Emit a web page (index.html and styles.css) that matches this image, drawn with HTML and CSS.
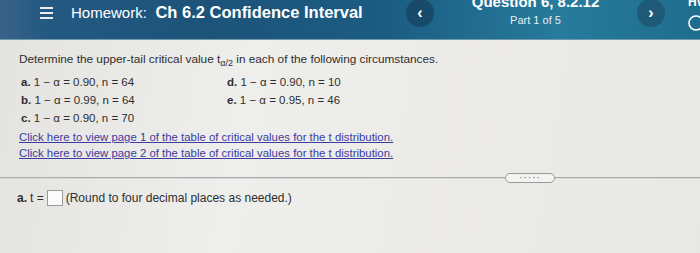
FILE: index.html
```html
<!DOCTYPE html>
<html lang="en">
<head>
    <meta charset="UTF-8">
    <meta name="viewport" content="width=device-width, initial-scale=1.0">
    <link rel="stylesheet" href="styles.css">
    <title>Homework: Ch 6.2 Confidence Interval</title>
</head>
<body>

    <header class="topbar">
        <span class="menu">
            <span></span><span></span><span></span>
        </span>
        <h1 class="title"><span class="label">Homework:</span> <b>Ch 6.2 Confidence Interval</b></h1>
        <div class="nav">
            <button class="circle prev">&#8249;</button>
            <div class="qinfo">
                <div class="qname">Question 6, 8.2.12</div>
                <div class="qpart">Part 1 of 5</div>
            </div>
            <button class="circle next">&#8250;</button>
            <div class="hw">
                <span class="hw-label">HW</span>
                <svg class="ring" width="20" height="20" viewBox="0 0 20 20">
                    <circle cx="10" cy="10" r="7" fill="none" stroke="#fff" stroke-width="1.6"/>
                </svg>
            </div>
        </div>
    </header>

    <main class="page">
        <section class="question">
            <p class="prompt">Determine the upper-tail critical value t<sub>&alpha;/2</sub> in each of the following circumstances.</p>
            <div class="parts">
                <div><b>a.</b> 1 &minus; &alpha; = 0.90, n = 64</div>
                <div><b>d.</b> 1 &minus; &alpha; = 0.90, n = 10</div>
                <div><b>b.</b> 1 &minus; &alpha; = 0.99, n = 64</div>
                <div><b>e.</b> 1 &minus; &alpha; = 0.95, n = 46</div>
                <div><b>c.</b> 1 &minus; &alpha; = 0.90, n = 70</div>
            </div>
            <div class="links">
                <a href="#">Click here to view page 1 of the table of critical values for the t distribution.</a>
                <a href="#">Click here to view page 2 of the table of critical values for the t distribution.</a>
            </div>
        </section>

        <div class="divider">
            <span class="rule"></span>
            <button class="more">&middot;&middot;&middot;&middot;&middot;</button>
            <span class="rule"></span>
        </div>

        <div class="answer">
            <b>a.</b> t = <span class="box"></span> (Round to four decimal places as needed.)
        </div>
    </main>

</body>
</html>
```

FILE: styles.css
```css
body {
    margin: 0;
    width: 700px;
    height: 253px;
    overflow: hidden;
    font-family: "Liberation Sans", Arial, sans-serif;
    background: linear-gradient(100deg, #e4e3e0 0%, #eeeeec 35%, #ecebe8 65%, #e8e8e5 100%);
    color: #2e2e2e;
}

.topbar {
    height: 40px;
    display: flex;
    align-items: center;
    padding-bottom: 14px;
    box-sizing: border-box;
    background: linear-gradient(90deg, #3a6288 0%, #245a82 6%, #1d5379 30%, #1b5c83 55%, #277b9c 80%, #1f6d8d 100%);
    color: #fff;
    border-bottom: 1px solid #6f99ad;
}

.menu {
    display: flex;
    flex-direction: column;
    gap: 3px;
    margin-left: 40px;
    width: 13px;
}

.menu span {
    height: 2px;
    background: #e8eef3;
}

.title {
    margin: 0 0 0 18px;
    font-size: 16.5px;
    font-weight: normal;
    white-space: nowrap;
}

.title .label {
    font-size: 15px;
    margin-right: 4px;
}

.nav {
    margin-left: auto;
    align-self: stretch;
    display: flex;
    align-items: center;
}

.circle {
    width: 28px;
    height: 28px;
    border: none;
    border-radius: 50%;
    color: #fff;
    font-size: 16px;
    font-weight: bold;
    padding: 0;
    font-family: "Liberation Sans", Arial, sans-serif;
}

.prev {
    background-color: #184a6a;
}

.next {
    background-color: #1e5a78;
}

.qinfo {
    width: 203px;
    text-align: center;
    margin-top: -5px;
}

.qname {
    font-size: 15px;
    font-weight: bold;
    line-height: 16px;
}

.qpart {
    font-size: 11px;
    line-height: 14px;
    margin-top: 3px;
    color: #e6eef3;
}

.hw {
    width: 12px;
    margin-left: 23px;
    align-self: flex-start;
    display: flex;
    flex-direction: column;
}

.hw-label {
    font-size: 12px;
    font-weight: bold;
    line-height: 10px;
    margin-top: -3px;
}

.ring {
    margin-top: 6px;
    margin-left: -2px;
}

.question {
    padding: 11px 0 0 19px;
    font-size: 11.8px;
}

.prompt {
    margin: 0;
    line-height: 16px;
}

.prompt sub {
    font-size: 9px;
    vertical-align: -3px;
    line-height: 0;
}

.parts {
    display: grid;
    grid-template-columns: 206px auto;
    margin: 6px 0 0 2px;
    line-height: 18px;
    font-size: 11.5px;
}

.links {
    display: flex;
    flex-direction: column;
    align-items: flex-start;
    margin-top: 2px;
    line-height: 16px;
    font-size: 11.4px;
}

.links a {
    color: #3b3ba0;
}

.divider {
    display: grid;
    grid-template-columns: 505px 50px 1fr;
    align-items: center;
    margin-top: 12px;
}

.rule {
    height: 1px;
    background: #aaa;
    border-bottom: 1px solid #d8d8d6;
}

.more {
    height: 10px;
    border: 1px solid #999;
    border-radius: 5px;
    background: #f3f3f1;
    color: #666;
    font-size: 10px;
    line-height: 6px;
    padding: 0;
    letter-spacing: 1px;
}

.answer {
    margin-top: 7px;
    padding-left: 17px;
    font-size: 12px;
    line-height: 16px;
    display: flex;
    align-items: center;
    gap: 3px;
}

.box {
    display: inline-block;
    width: 14px;
    height: 14px;
    border: 1px solid #9a9a9a;
    background: #fbfbfb;
}
```
